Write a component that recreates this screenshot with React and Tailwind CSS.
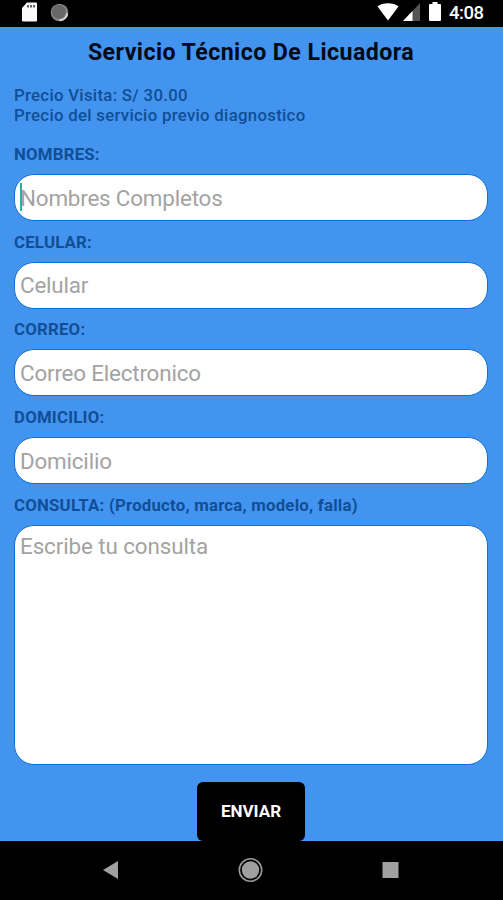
const FIELDS = [
  { label: 'NOMBRES:', placeholder: 'Nombres Completos', focused: true },
  { label: 'CELULAR:', placeholder: 'Celular' },
  { label: 'CORREO:', placeholder: 'Correo Electronico' },
  { label: 'DOMICILIO:', placeholder: 'Domicilio' },
];

function StatusBar() {
  return (
    <header className="flex h-[27px] items-start bg-black pl-[21px] text-white">
      <svg className="mt-[2px] h-5 w-4" viewBox="0 0 16 20" fill="none">
        <path d="M6 .5h9a1 1 0 0 1 1 1v17a1 1 0 0 1-1 1H2a1 1 0 0 1-1-1V6z" fill="#fafafa" />
        <path d="M7 3v2.500M10 3v2.500M13 3v2.500" stroke="#555" strokeWidth="1.800" />
      </svg>
      <svg className="mt-[3px] ml-[13px] h-[19px] w-[19px]" viewBox="0 0 19 19">
        <circle cx="9.5" cy="9.5" r="8.800" fill="#858585" />
        <path d="M17.200 10.500A8 8 0 0 1 9.500 17.300" fill="none" stroke="#d6d6d6" strokeWidth="2" />
        <circle cx="8.8" cy="8.8" r="7" fill="#686868" />
      </svg>
      <div className="flex-1" />
      <svg className="mt-[2px] h-5 w-[22px]" viewBox="0 0 22 20">
        <path d="M.5 4.5C6 .2 16 .2 21.500 4.500L11 18.500z" fill="#fff" />
      </svg>
      <svg className="mt-[3px] ml-1 h-[18px] w-[17px]" viewBox="0 0 17 18">
        <path d="M17 0v18H0z" fill="#555" />
        <path d="M9.500 8v10H0z" fill="#fff" />
      </svg>
      <svg className="mt-[2px] ml-[9px] h-[19px] w-3" viewBox="0 0 12 19">
        <path d="M3.500 0h5v2H11a1 1 0 0 1 1 1v15a1 1 0 0 1-1 1H1a1 1 0 0 1-1-1V3a1 1 0 0 1 1-1h2.500z" fill="#fff" />
      </svg>
      <span className="mt-px ml-[8px] w-[54px] text-[18.500px] leading-6 font-medium tracking-[-0.5px]">4:08</span>
    </header>
  );
}

function Label({ children }) {
  return (
    <div className="h-5 text-[16.800px] leading-5 font-bold tracking-[0.220px] whitespace-nowrap text-[#114e96]">
      {children}
    </div>
  );
}

function Field({ label, placeholder, focused }) {
  return (
    <label className="mb-[10.700px] block">
      <Label>{label}</Label>
      <div className="mt-[10px] flex h-[47px] items-center rounded-[20px] border border-[#0c70d2] bg-white pl-[5px]">
        <div className="relative text-[22.400px] leading-7 tracking-[-0.180px] whitespace-nowrap text-[#a3a3a3]">
          {focused && <i className="absolute top-[-1px] left-0 h-[28px] w-[2px] bg-[#20b5a5]" />}
          {placeholder}
        </div>
      </div>
    </label>
  );
}

function NavBar() {
  return (
    <nav className="flex h-[59px] items-start bg-black pt-4 pl-[102px]">
      <svg className="h-[26px] w-[298px]" viewBox="0 0 298 26">
        <path d="M1 13l15-9v18z" fill="#a0a0a0" />
        <circle cx="148.500" cy="13" r="11.200" fill="none" stroke="#999" strokeWidth="1.600" />
        <circle cx="148.500" cy="13" r="8.700" fill="#a0a0a0" />
        <rect x="280.500" y="5" width="16" height="16" fill="#a0a0a0" />
      </svg>
    </nav>
  );
}

export default function App() {
  return (
    <div className="flex h-[900px] w-[503px] flex-col overflow-hidden bg-[#4294ef] font-['Roboto',sans-serif]">
      <StatusBar />
      <main className="flex h-[814px] flex-col pt-[9px] pr-[15px] pl-[14px]">
        <h1 className="h-8 text-center text-[23.200px] leading-8 font-bold tracking-[0.420px] whitespace-nowrap text-[#030a18]">
          Servicio Técnico De Licuadora
        </h1>
        <div className="mt-[17px] mb-[19px] text-[16.800px] leading-5 font-medium tracking-[0.290px] text-[#114e96]">
          <p>Precio Visita: S/ 30.00</p>
          <p>Precio del servicio previo diagnostico</p>
        </div>
        {FIELDS.map((field) => (
          <Field key={field.label} {...field} />
        ))}
        <Label>CONSULTA: (Producto, marca, modelo, falla)</Label>
        <div className="mt-[10px] h-[240px] shrink-0 rounded-[20px] border border-[#0c70d2] bg-white pt-[6px] pl-[5px] text-[22.400px] leading-7 tracking-[-0.100px] text-[#a3a3a3]">
          Escribe tu consulta
        </div>
        <button className="mt-[17px] h-[59px] w-[108px] shrink-0 self-center rounded-[6px] bg-black pt-px text-[17px] font-bold text-white">
          ENVIAR
        </button>
      </main>
      <NavBar />
    </div>
  );
}
